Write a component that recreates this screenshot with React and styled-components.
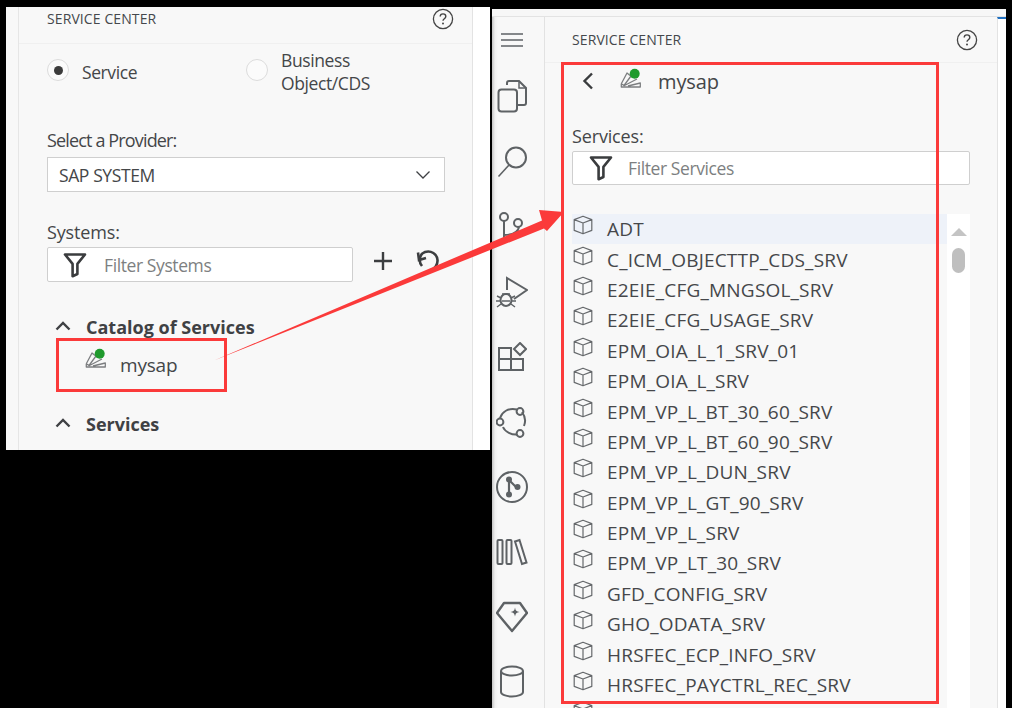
import React from "react";
import styled, { createGlobalStyle } from "styled-components";

const Global = createGlobalStyle`
  html, body { margin: 0; padding: 0; background: #000; overflow: hidden; }
  * { box-sizing: border-box; }
`;

const FONT = `"Open Sans", "Noto Sans", "Liberation Sans", sans-serif`;
const INK = "#444648";

const Page = styled.div`
  position: relative;
  width: 1012px;
  height: 708px;
  background: #000;
  overflow: hidden;
  display: flex;
  align-items: flex-start;
  font-family: ${FONT};
  color: ${INK};
`;

/* ---------- Left screenshot ---------- */
const LeftShot = styled.section`
  width: 484px;
  height: 443px;
  margin: 7px 0 0 6px;
  background: #fff;
  display: flex;
  overflow: hidden;
`;
const LeftGutter = styled.div`
  width: 13px;
  background: #f8f8f8;
  border-right: 1px solid #e6e6e6;
  flex: none;
`;
const LeftPanel = styled.div`
  width: 454px;
  flex: none;
  background: #f8f8f8;
  border-right: 1px solid #e3e3e3;
  display: flex;
  flex-direction: column;
`;
const LeftWhite = styled.div`
  flex: 1;
  background: #fff;
`;
const HeaderRow = styled.header`
  height: ${(p) => p.$h}px;
  flex: none;
  display: flex;
  align-items: center;
  justify-content: space-between;
  padding: 0 ${(p) => p.$right}px ${(p) => p.$pb || 0}px ${(p) => p.$left}px;
  border-bottom: 1px solid #f0f0f0;
`;
const PanelTitle = styled.h2`
  margin: 0;
  font-size: 14px;
  font-weight: 400;
  letter-spacing: 0.1px;
  color: #45484c;
`;
const LeftBody = styled.div`
  padding: 0 26px 0 28px;
  display: flex;
  flex-direction: column;
`;
const RadioRow = styled.div`
  display: flex;
  height: 56px;
  align-items: center;
`;
const RadioItem = styled.label`
  display: flex;
  align-items: center;
  width: ${(p) => p.$w}px;
  font-size: 17.5px;
  letter-spacing: -0.4px;
  line-height: 23px;
`;
const RadioMark = styled.span`
  width: 22px;
  height: 22px;
  margin-right: 13px;
  margin-top: -4px;
  border-radius: 50%;
  border: 1px solid #dcdcdc;
  background: #fbfbfb;
  display: flex;
  align-items: center;
  justify-content: center;
  flex: none;
  &::after {
    content: "";
    display: ${(p) => (p.$on ? "block" : "none")};
    width: 9px;
    height: 9px;
    border-radius: 50%;
    background: #3c3c3c;
  }
`;
const FieldLabel = styled.div`
  font-size: 18px;
  letter-spacing: ${(p) => p.$ls}px;
  line-height: 24px;
  margin-top: ${(p) => p.$mt}px;
  color: ${INK};
`;
const SelectBox = styled.div`
  height: 35px;
  margin-top: 5px;
  width: 398px;
  background: #fff;
  border: 1px solid #cfcfcf;
  display: flex;
  align-items: center;
  justify-content: space-between;
  padding: 0 13px 0 11px;
  font-size: 17.5px;
  letter-spacing: -0.4px;
`;
const FilterBox = styled.div`
  height: ${(p) => p.$h || 35}px;
  width: ${(p) => p.$w}px;
  margin-top: ${(p) => p.$mt || 0}px;
  background: #fff;
  border: 1px solid #cfcfcf;
  border-radius: 2px;
  display: flex;
  align-items: center;
  padding-left: ${(p) => p.$pl}px;
  gap: ${(p) => p.$gap}px;
  font-size: 17.5px;
  letter-spacing: -0.4px;
  color: #7d7f81;
  flex: none;
`;
const SystemsRow = styled.div`
  display: flex;
  align-items: center;
  margin-top: 3px;
`;
const ToolIcon = styled.svg`
  display: block;
  flex: none;
  margin-left: ${(p) => p.$ml || 0}px;
  margin-top: ${(p) => p.$mt || 0}px;
`;
const TreeHead = styled.div`
  display: flex;
  align-items: center;
  gap: 15px;
  margin: ${(p) => p.$mt}px 0 0 8px;
  height: 24px;
  font-size: 18px;
  font-weight: 700;
  color: #3f4144;
`;
const TreeItem = styled.div`
  display: flex;
  align-items: center;
  gap: 13px;
  margin: 10px 0 0 37px;
  height: 32px;
  font-size: 19px;
  letter-spacing: -0.2px;
`;

/* ---------- Right screenshot ---------- */
const RightShot = styled.section`
  width: 514px;
  height: 699px;
  margin: 9px 0 0 2px;
  background: #f8f8f8;
  display: flex;
  flex-direction: column;
  overflow: hidden;
`;
const TopStrip = styled.div`
  height: 8px;
  flex: none;
  background: #f7f7f7;
  border-bottom: 1px solid #e3e3e3;
`;
const Workbench = styled.div`
  flex: 1;
  display: flex;
  min-height: 0;
`;
const Rail = styled.nav`
  width: 53px;
  flex: none;
  border-right: 1px solid #e2e2e2;
  background: linear-gradient(to right, #c4c4c4 0, #f0f0f0 3px, #f8f8f8 6px);
  display: flex;
  flex-direction: column;
  align-items: flex-start;
  padding-top: 7px;
`;
const RailSlot = styled.div`
  width: 40px;
  height: ${(p) => p.$h}px;
  margin-bottom: ${(p) => p.$mb || 0}px;
  flex: none;
  display: flex;
  align-items: center;
  justify-content: center;
`;
const Panel = styled.div`
  width: 452px;
  flex: none;
  display: flex;
  flex-direction: column;
  min-height: 0;
`;
const SideWhite = styled.div`
  flex: 1;
  background: #fff;
  border-left: 1px solid #e3e3e3;
  border-top: 2px solid #1f6fc0;
`;
const BackRow = styled.div`
  height: 36px;
  flex: none;
  display: flex;
  align-items: center;
  padding-left: 37px;
  gap: 16px;
  font-size: 20px;
  letter-spacing: -0.1px;
`;
const BackLink = styled.span`
  margin-right: 9px;
  display: block;
`;
const RightBody = styled.div`
  padding-left: 27px;
  display: flex;
  flex-direction: column;
  min-height: 0;
  flex: 1;
`;
const ListFrame = styled.div`
  margin-top: 29px;
  width: 398px;
  display: flex;
  flex: 1;
  min-height: 0;
`;
const List = styled.ul`
  list-style: none;
  margin: 0;
  padding: 0;
  width: 375px;
  flex: none;
`;
const Row = styled.li`
  height: 30.4px;
  display: flex;
  align-items: center;
  gap: 14px;
  font-size: 19px;
  letter-spacing: 0.2px;
  white-space: nowrap;
  background: ${(p) => (p.$active ? "#eef2f9" : "transparent")};
  color: #45474a;
`;
const Scroll = styled.div`
  flex: 1;
  background: #fff;
  position: relative;
`;
const ScrollUp = styled.div`
  position: absolute;
  left: 4px;
  top: 14px;
  width: 0;
  height: 0;
  border-left: 8px solid transparent;
  border-right: 8px solid transparent;
  border-bottom: 8px solid #c4c4c4;
`;
const ScrollThumb = styled.div`
  position: absolute;
  left: 5px;
  top: 34px;
  width: 13px;
  height: 25px;
  border-radius: 7px;
  background: #bfbfbf;
`;

/* ---------- Annotations ---------- */
const RedBox = styled.div`
  position: absolute;
  left: ${(p) => p.$x}px;
  top: ${(p) => p.$y}px;
  width: ${(p) => p.$w}px;
  height: ${(p) => p.$h}px;
  border: 3px solid #fb3a3a;
  pointer-events: none;
`;
const ArrowSvg = styled.svg`
  position: absolute;
  left: 0;
  top: 0;
  pointer-events: none;
`;

/* ---------- Icons ---------- */
const STROKE = "#5e6265";
const Help = () => (
  <ToolIcon width="22" height="22" viewBox="0 0 22 22" fill="none">
    <circle cx="11" cy="11" r="9.6" stroke="#444" strokeWidth="1.3" />
    <path d="M8.2 8.6c0-1.7 1.2-2.7 2.8-2.7s2.8 1 2.8 2.5c0 2.3-2.8 2.3-2.8 4.4" stroke="#444" strokeWidth="1.4" />
    <circle cx="11" cy="15.6" r="1" fill="#444" />
  </ToolIcon>
);
const Funnel = () => (
  <ToolIcon width="24" height="26" viewBox="0 0 24 26" fill="none">
    <path d="M2 2.500h20l-7.600 9.400V22l-4.800 2.200V11.900z" stroke="#3a3c3e" strokeWidth="2.600" strokeLinejoin="round" />
  </ToolIcon>
);
const Chevron = ({ up }) => (
  <ToolIcon width="16" height="10" viewBox="0 0 16 10" fill="none" $mt={up ? -3 : 0}>
    <path d={up ? "M1.500 8.500 8 2l6.500 6.500" : "M1.500 1.500 8 8l6.500-6.500"} stroke="#3f4144" strokeWidth={up ? 2.4 : 1.3} />
  </ToolIcon>
);
const Sap = ({ mt }) => (
  <ToolIcon width="23" height="22" viewBox="0 0 23 22" fill="none" $mt={mt}>
    <path d="M2.300 15.700 8 5l3 2.500M2.300 15.700 5 17.500 12 8M5.500 17.500 18 11M2.300 15.700V19h19v-4L9 18" stroke="#7c7e80" strokeWidth="1.300" strokeLinejoin="round" />
    <circle cx="15.700" cy="5.700" r="5" fill="#1f9a2d" />
  </ToolIcon>
);
const Cube = () => (
  <ToolIcon width="20" height="20" viewBox="0 0 20 20" fill="none" $mt={-8} $ml={1}>
    <path d="M10 1.200 18.800 4.600v10.800L10 18.800 1.200 15.400V4.600zM1.200 4.600 10 8l8.800-3.400M10 8v10.800" stroke="#66696c" strokeWidth="1.200" strokeLinejoin="round" />
  </ToolIcon>
);
const RailIcon = ({ w = 32, h = 32, children }) => (
  <ToolIcon width={w} height={h} viewBox={`0 0 ${w} ${h}`} fill="none" stroke={STROKE} strokeWidth="2">
    {children}
  </ToolIcon>
);

const RAIL = [
  <RailIcon w={24} h={16} key="menu"><path d="M1 2h22M1 8h22M1 14h22" strokeWidth="1.500" /></RailIcon>,
  <RailIcon key="files" w={30} h={33}>
    <path d="M10 5V3a2 2 0 0 1 2-2h10l7 7v15a2 2 0 0 1-2 2H20" />
    <path d="M22 1v7h7" strokeWidth="1.500" />
    <rect x="1.500" y="9.500" width="18.500" height="22" rx="3" />
  </RailIcon>,
  <RailIcon key="search">
    <circle cx="20" cy="11.500" r="10" />
    <path d="M13 19 2.500 30.500" strokeWidth="1.600" />
  </RailIcon>,
  <RailIcon key="git">
    <circle cx="8" cy="6" r="4" />
    <circle cx="22" cy="12" r="4" />
    <path d="M8 10v18M8 24c8 0 14-2 15-8" />
  </RailIcon>,
  <RailIcon key="debug">
    <path d="M11 14 11 2l20 12-13 9" />
    <ellipse cx="10" cy="24" rx="5.500" ry="6" />
    <path d="M6 18h8M1 20l4 2M1 31l4-3M19 20l-4 2M19 31l-4-3M0 25h4M16 25h4M6 25h8" strokeWidth="1.400" />
  </RailIcon>,
  <RailIcon key="ext" w={30} h={30}>
    <path d="M2 6h12v22H2zM2 17h24v11H14" />
    <path d="m23 1 6 6-6 6-6-6z" />
  </RailIcon>,
  <RailIcon key="cycle">
    <path d="M21 3.500C12 1.500 6 6 4 12M7 21c2 5 9 8 14 7.500M28 20c2-5 1-10-2-14" />
    <circle cx="24" cy="5.500" r="3.400" />
    <circle cx="4" cy="16" r="3.400" />
    <circle cx="24" cy="27.500" r="3.400" />
  </RailIcon>,
  <RailIcon key="pr">
    <circle cx="16" cy="16" r="15" />
    <path d="M13 9v14M13 9l8 8" strokeWidth="2.200" />
    <circle cx="13" cy="8.500" r="3" fill={STROKE} stroke="none" />
    <circle cx="13" cy="23.500" r="3" fill={STROKE} stroke="none" />
    <circle cx="21.500" cy="16" r="3" fill={STROKE} stroke="none" />
  </RailIcon>,
  <RailIcon key="books" w={32} h={28}>
    <rect x="1.500" y="2" width="5" height="24" rx="1" />
    <rect x="10.500" y="2" width="5" height="24" rx="1" />
    <path d="M19 3.500 23.500 2l7 22.500-4.500 1.500z" />
  </RailIcon>,
  <RailIcon key="gem">
    <path d="M8 2h16l7 10-15 18L1 12z" strokeWidth="2.400" strokeLinejoin="round" />
    <path d="M19 6.500c.4 3 1.600 4.200 4.500 4.500-2.900.4-4.100 1.600-4.500 4.500-.4-2.900-1.600-4.100-4.500-4.500 2.900-.3 4.100-1.500 4.500-4.500z" fill={STROKE} stroke="none" />
  </RailIcon>,
  <RailIcon key="db" w={26} h={33}>
    <ellipse cx="13" cy="6" rx="11" ry="4.500" />
    <path d="M2 6v21c0 2.500 5 4.500 11 4.500S24 29.500 24 27V6" />
  </RailIcon>,
];

const SERVICES = [
  "ADT",
  "C_ICM_OBJECTTP_CDS_SRV",
  "E2EIE_CFG_MNGSOL_SRV",
  "E2EIE_CFG_USAGE_SRV",
  "EPM_OIA_L_1_SRV_01",
  "EPM_OIA_L_SRV",
  "EPM_VP_L_BT_30_60_SRV",
  "EPM_VP_L_BT_60_90_SRV",
  "EPM_VP_L_DUN_SRV",
  "EPM_VP_L_GT_90_SRV",
  "EPM_VP_L_SRV",
  "EPM_VP_LT_30_SRV",
  "GFD_CONFIG_SRV",
  "GHO_ODATA_SRV",
  "HRSFEC_ECP_INFO_SRV",
  "HRSFEC_PAYCTRL_REC_SRV",
  "",
];

export default function App() {
  return (
    <Page>
      <Global />
      <LeftShot>
        <LeftGutter />
        <LeftPanel>
          <HeaderRow $h={37} $left={28} $right={18} $pb={13}>
            <PanelTitle>SERVICE CENTER</PanelTitle>
            <Help />
          </HeaderRow>
          <LeftBody>
            <RadioRow>
              <RadioItem $w={199}>
                <RadioMark $on />
                Service
              </RadioItem>
              <RadioItem $w={180}>
                <RadioMark />
                <span>Business<br />Object/CDS</span>
              </RadioItem>
            </RadioRow>
            <FieldLabel $mt={28} $ls={-0.85}>Select a Provider:</FieldLabel>
            <SelectBox>
              SAP SYSTEM
              <Chevron />
            </SelectBox>
            <FieldLabel $mt={28} $ls={-0.15}>Systems:</FieldLabel>
            <SystemsRow>
              <FilterBox $w={306} $gap={17} $pl={15}>
                <Funnel />
                Filter Systems
              </FilterBox>
              <ToolIcon width="20" height="20" viewBox="0 0 20 20" $ml={20} $mt={-8} fill="none">
                <path d="M10 1v18M1 10h18" stroke="#3c3e40" strokeWidth="2.400" />
              </ToolIcon>
              <ToolIcon width="24" height="24" viewBox="0 0 24 24" $ml={23} $mt={-8} fill="none">
                <path d="M6 17C2 12 3.500 5 9 3c6-2 12 2 12.500 8 .3 5-3 9-6.500 10" stroke="#3c3e40" strokeWidth="2.600" />
                <path d="M2 3.500 3 11l7-2" stroke="#3c3e40" strokeWidth="2.600" />
              </ToolIcon>
            </SystemsRow>
            <TreeHead $mt={33}>
              <Chevron up />
              Catalog of Services
            </TreeHead>
            <TreeItem>
              <Sap mt={-12} />
              mysap
            </TreeItem>
            <TreeHead $mt={31}>
              <Chevron up />
              Services
            </TreeHead>
          </LeftBody>
        </LeftPanel>
        <LeftWhite />
      </LeftShot>

      <RightShot>
        <TopStrip />
        <Workbench>
          <Rail>
            {RAIL.map((icon, i) => (
              <RailSlot key={i} $h={i === 0 ? 32 : 65} $mb={i === 0 ? 8 : 0}>
                {icon}
              </RailSlot>
            ))}
          </Rail>
          <Panel>
            <HeaderRow $h={46} $left={27} $right={19}>
              <PanelTitle>SERVICE CENTER</PanelTitle>
              <Help />
            </HeaderRow>
            <BackRow>
              <BackLink>
                <ToolIcon width="12" height="18" viewBox="0 0 12 18" fill="none">
                  <path d="M10 1.500 2.500 9l7.500 7.500" stroke="#3a3c3e" strokeWidth="2.400" />
                </ToolIcon>
              </BackLink>
              <Sap mt={-4} />
              <span>mysap</span>
            </BackRow>
            <RightBody>
              <FieldLabel $mt={25} $ls={-0.15}>Services:</FieldLabel>
              <FilterBox $w={398} $gap={15} $h={34} $pl={16} $mt={3}>
                <Funnel />
                Filter Services
              </FilterBox>
              <ListFrame>
                <List>
                  {SERVICES.map((name, i) => (
                    <Row key={i} $active={i === 0}>
                      <Cube />
                      {name}
                    </Row>
                  ))}
                </List>
                <Scroll>
                  <ScrollUp />
                  <ScrollThumb />
                </Scroll>
              </ListFrame>
            </RightBody>
          </Panel>
          <SideWhite />
        </Workbench>
      </RightShot>

      <RedBox $x={56} $y={338} $w={171} $h={54} />
      <RedBox $x={561} $y={62} $w={378} $h={642} />
      <ArrowSvg width="1012" height="708" viewBox="0 0 1012 708">
        <path d="M214 360.500 L542 220.500 L539 210 L564 212 L547 231 L544 228.500 Z" fill="#fb3a3a" />
      </ArrowSvg>
    </Page>
  );
}
